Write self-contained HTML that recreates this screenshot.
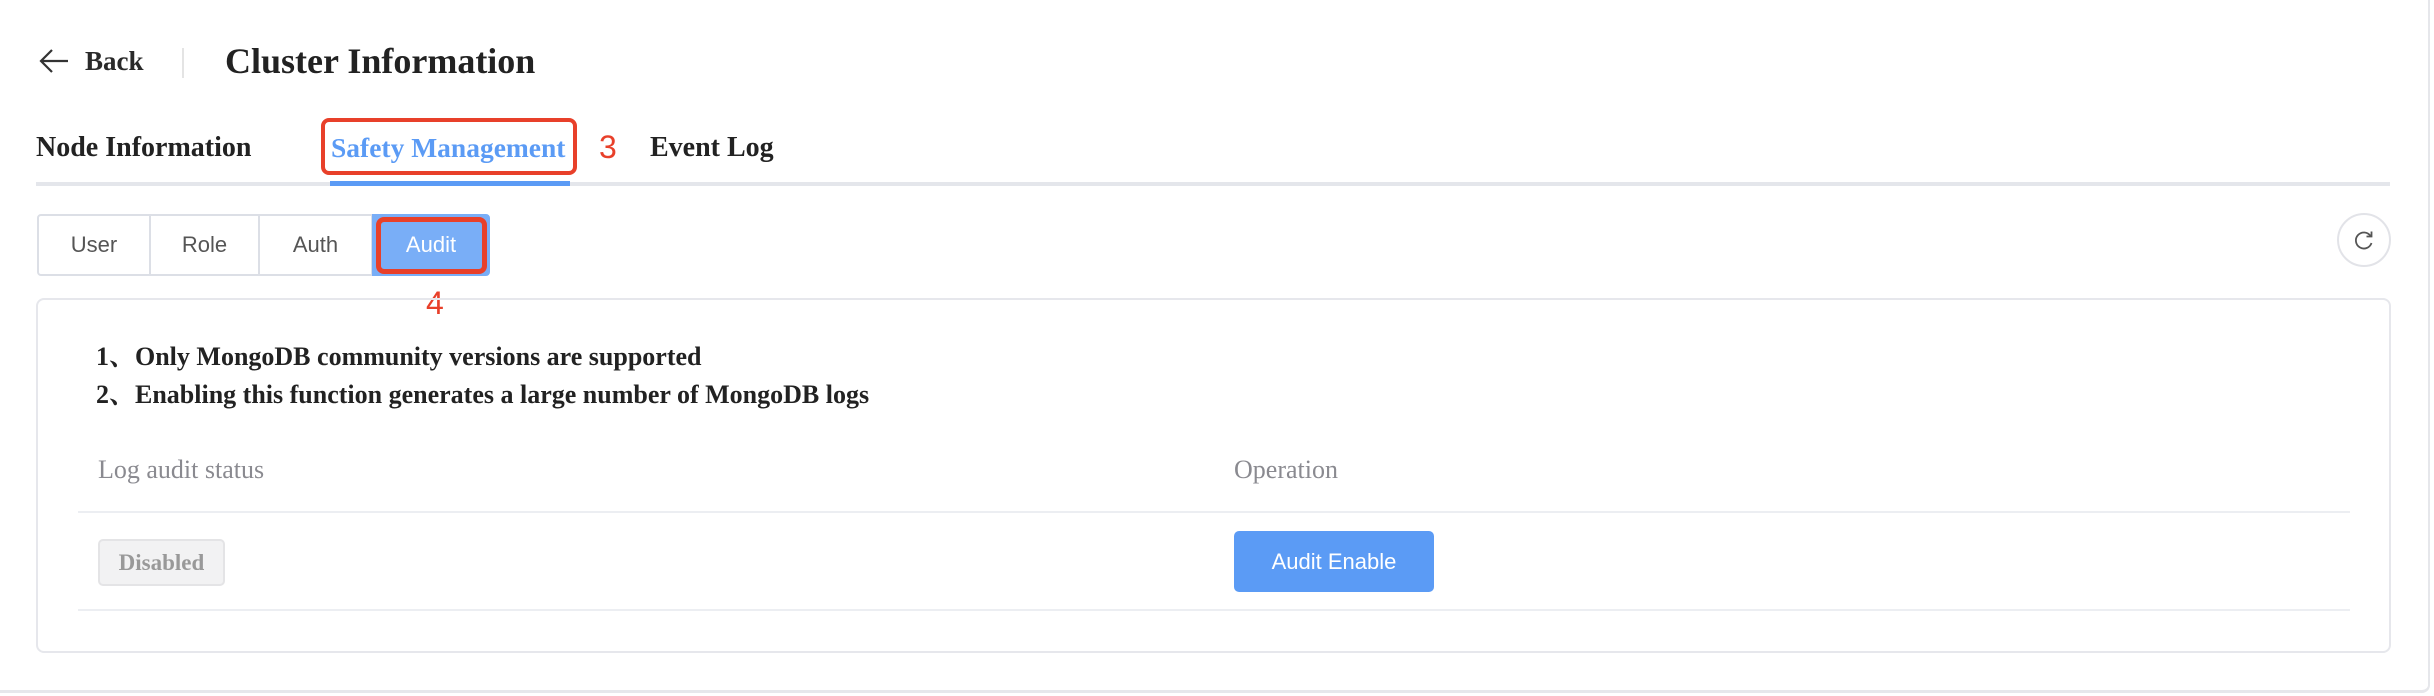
<!DOCTYPE html>
<html><head><meta charset="utf-8"><style>
*{margin:0;padding:0;box-sizing:border-box}
body{width:2434px;height:696px;background:#fff;position:relative;overflow:hidden;font-family:"Liberation Serif","Noto Serif CJK SC",serif;color:#333}
.a{position:absolute;white-space:nowrap}
.outer{position:absolute;left:-10px;top:-10px;width:2440px;height:703px;border-right:2px solid #e6e7eb;border-bottom:3px solid #e6e7eb;border-radius:0 0 8px 0}
.seg{position:absolute;top:214px;height:62px;border:2px solid #dcdfe6;font-family:"Liberation Sans",sans-serif;font-size:22px;color:#555;display:flex;align-items:center;justify-content:center;background:#fff}
</style></head><body>
<div class="outer"></div>
<svg class="a" style="left:38px;top:47px" width="32" height="28" viewBox="0 0 32 28"><path d="M14 3L3 14L14 25M3 14H30" fill="none" stroke="#333" stroke-width="2.2"/></svg>
<div class="a" style="left:85px;top:43px;font-size:27px;line-height:36px;font-weight:bold;color:#2a2a2a">Back</div>
<div class="a" style="left:182px;top:48px;width:2px;height:30px;background:#e4e4e4"></div>
<div class="a" style="left:225px;top:38px;font-size:36px;line-height:46px;font-weight:bold;color:#222">Cluster Information</div>

<div class="a" style="left:36px;top:130px;font-size:28px;line-height:36px;font-weight:bold;color:#222">Node Information</div>
<div class="a" style="left:331px;top:130px;font-size:27.5px;line-height:36px;font-weight:bold;color:#5b9bf5">Safety Management</div>
<div class="a" style="left:650px;top:130px;font-size:28px;line-height:36px;font-weight:bold;color:#222">Event Log</div>
<div class="a" style="left:321px;top:118px;width:256px;height:57px;border:4px solid #e8402a;border-radius:8px"></div>
<div class="a" style="left:599px;top:128px;font-family:'Liberation Sans',sans-serif;font-size:32px;line-height:38px;color:#e8402a">3</div>
<div class="a" style="left:36px;top:182px;width:2354px;height:4px;background:#e4e6eb"></div>
<div class="a" style="left:330px;top:181px;width:240px;height:5px;background:#5b9bf5"></div>

<div class="seg" style="left:37px;width:114px;border-radius:4px 0 0 4px">User</div>
<div class="seg" style="left:149px;width:111px">Role</div>
<div class="seg" style="left:258px;width:115px">Auth</div>
<div class="seg" style="left:372px;width:118px;background:#79aef7;border-color:#79aef7;color:#fff;border-radius:0 4px 4px 0">Audit</div>
<div class="a" style="left:376px;top:217px;width:111px;height:57px;border:5px solid #e8402a;border-radius:8px"></div>
<div class="a" style="left:426px;top:284px;font-family:'Liberation Sans',sans-serif;font-size:32px;line-height:38px;color:#e8402a">4</div>

<div class="a" style="left:2337px;top:213px;width:54px;height:54px;border:2px solid #e2e3e8;border-radius:50%"></div>
<svg class="a" style="left:2352px;top:228px" width="24" height="24" viewBox="0 0 24 24"><path d="M18.5 8A8 8 0 1 0 19.5 15" fill="none" stroke="#555" stroke-width="1.8"/><path d="M19.5 3.5V8.5H14.5" fill="none" stroke="#555" stroke-width="1.8"/></svg>

<div class="a" style="left:36px;top:298px;width:2355px;height:355px;border:2px solid #e6e7ec;border-radius:8px"></div>
<div class="a" style="left:96px;top:341px;font-size:26px;line-height:32px;font-weight:bold;color:#222">1、Only MongoDB community versions are supported</div>
<div class="a" style="left:96px;top:379px;font-size:26px;line-height:32px;font-weight:bold;color:#222">2、Enabling this function generates a large number of MongoDB logs</div>
<div class="a" style="left:98px;top:454px;font-size:26px;line-height:32px;color:#8a8a90">Log audit status</div>
<div class="a" style="left:1234px;top:454px;font-size:26px;line-height:32px;color:#8a8a90">Operation</div>
<div class="a" style="left:78px;top:511px;width:2272px;height:2px;background:#eceef2"></div>
<div class="a" style="left:98px;top:539px;width:127px;height:47px;background:#f2f2f3;border:2px solid #e4e4e6;border-radius:5px;font-size:23px;font-weight:bold;color:#999;display:flex;align-items:center;justify-content:center">Disabled</div>
<div class="a" style="left:1234px;top:531px;width:200px;height:61px;background:#5b9bf5;border-radius:5px;font-family:'Liberation Sans',sans-serif;font-size:22px;color:#fff;display:flex;align-items:center;justify-content:center">Audit Enable</div>
<div class="a" style="left:78px;top:609px;width:2272px;height:2px;background:#eceef2"></div>
</body></html>
